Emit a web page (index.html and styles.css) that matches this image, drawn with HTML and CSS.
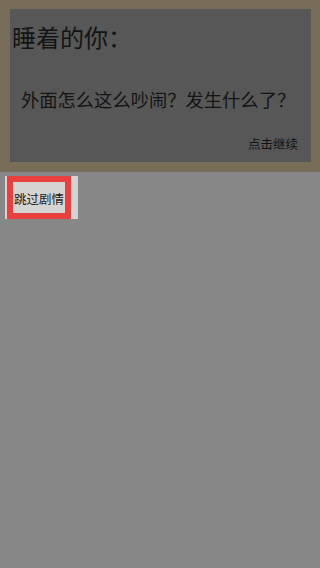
FILE: index.html
```html
<!DOCTYPE html>
<html lang="zh-CN">
<head>
  <meta charset="UTF-8">
  <meta name="viewport" content="width=device-width,initial-scale=1.0">
  <title>剧情</title>
  <link rel="stylesheet" href="styles.css">
</head>
<body>
  <div class="dialog">
    <div class="dialog-inner">
      <div class="speaker">睡着的你：</div>
      <p class="line">外面怎么这么吵闹？发生什么了？</p>
      <div class="next">点击继续</div>
    </div>
  </div>

  <div class="skip-bar">
    <button class="skip-btn">跳过剧情</button>
  </div>
</body>
</html>
```

FILE: styles.css
```css
html, body { height:100%; }
body { margin:0; padding:0; background:#878787; color:#141414;
       font-family:"Noto Sans CJK SC","Liberation Sans",sans-serif; }
.dialog { background:#786d58; padding:9px 9px 10px 10px; }
.dialog-inner { background:#575757; height:153px; box-sizing:border-box; padding:14px 13px 0 2px; }
.speaker { font-size:24px; line-height:28px; }
.line { font-size:18.3px; line-height:24px; margin:36px 0 0 9px; }
.next { font-size:12.5px; line-height:16px; text-align:right; margin-top:25px; }
.skip-bar { display:inline-block; margin:4px 0 0 5px; padding:0 7px 0 2px; background:#d6d3d3; }
.skip-btn { display:block; width:64px; height:43px; padding:3px 0 0; border:6px solid #e8403f; background:#d6d3d3;
            color:#1a1a1a; font-family:inherit; font-size:12.5px; line-height:16px; }
```
